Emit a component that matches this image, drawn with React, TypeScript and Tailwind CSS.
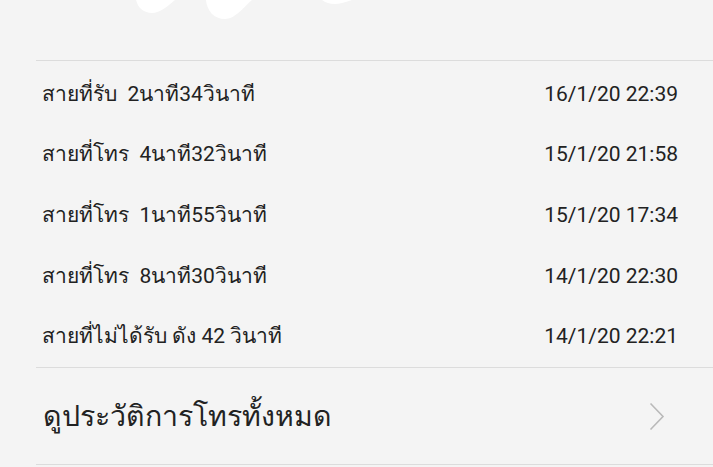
const calls = [
  { label: "สายที่รับ  2นาที34วินาที", time: "16/1/20 22:39" },
  { label: "สายที่โทร  4นาที32วินาที", time: "15/1/20 21:58" },
  { label: "สายที่โทร  1นาที55วินาที", time: "15/1/20 17:34" },
  { label: "สายที่โทร  8นาที30วินาที", time: "14/1/20 22:30" },
  { label: "สายที่ไม่ได้รับ ดัง 42 วินาที", time: "14/1/20 22:21" },
];

function Blobs() {
  return (
    <svg width="713" height="60" viewBox="0 0 713 60" className="block">
      <path d="M136 0 C138 8 144 13 152 13 C160 13 168 6 175 0 Z" fill="#ffffff" />
      <path d="M206 0 C207 11 214 19 225 19 C235 19 243 8 252 0 Z" fill="#ffffff" />
      <path d="M322 0 C327 4 335 5 342 3 C346 2 349 1 352 0 Z" fill="#ffffff" />
    </svg>
  );
}

export default function App() {
  return (
    <div
      className="w-[713px] h-[467px] overflow-hidden bg-[#f4f4f4] text-[#222222]"
      style={{ fontFamily: "Roboto, 'Noto Sans', sans-serif" }}
    >
      <Blobs />

      <div className="ml-[36px] border-t border-[#dcdcdc]">
        <div className="pt-[3px]">
          {calls.map((c) => (
            <div key={c.time + c.label} className="h-[60.7px] flex items-center justify-between pl-[6px] pr-[35px]">
              <span className="text-[21px] whitespace-pre">{c.label}</span>
              <span className="text-[21px]">{c.time}</span>
            </div>
          ))}
        </div>

        <div className="border-t border-[#dcdcdc] h-[97px] flex items-center justify-between pl-[7px] pr-[48px]">
          <span className="text-[28.5px] pt-[2px]">ดูประวัติการโทรทั้งหมด</span>
          <svg width="16" height="29" viewBox="0 0 16 29" className="mt-[1px]">
            <polyline points="1.5,1.5 14,14.5 1.5,27.5" fill="none" stroke="#b9b9b9" strokeWidth="1.6" />
          </svg>
        </div>
        <div className="border-t border-[#dcdcdc]" />
      </div>
    </div>
  );
}
